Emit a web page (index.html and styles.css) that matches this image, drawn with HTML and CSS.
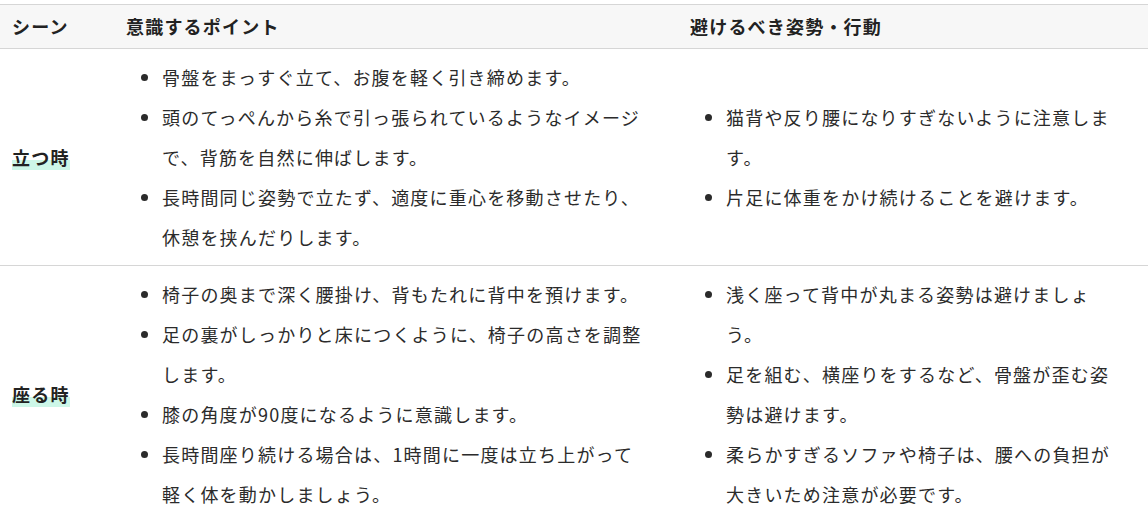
FILE: index.html
```html
<!DOCTYPE html>
<html lang="ja">
<head>
<meta charset="utf-8">
<link rel="stylesheet" href="styles.css">
</head>
<body>
<table class="posture">
  <colgroup>
    <col class="c-scene">
    <col class="c-point">
    <col class="c-avoid">
  </colgroup>
  <thead>
    <tr>
      <th>シーン</th>
      <th>意識するポイント</th>
      <th>避けるべき姿勢・行動</th>
    </tr>
  </thead>
  <tbody>
    <tr>
      <td class="scene"><span class="mark">立つ時</span></td>
      <td>
        <ul class="list">
          <li>骨盤をまっすぐ立て、お腹を軽く引き締めます。</li>
          <li>頭のてっぺんから糸で引っ張られているようなイメージで、背筋を自然に伸ばします。</li>
          <li>長時間同じ姿勢で立たず、適度に重心を移動させたり、休憩を挟んだりします。</li>
        </ul>
      </td>
      <td>
        <ul class="list">
          <li>猫背や反り腰になりすぎないように注意します。</li>
          <li>片足に体重をかけ続けることを避けます。</li>
        </ul>
      </td>
    </tr>
    <tr>
      <td class="scene"><span class="mark">座る時</span></td>
      <td>
        <ul class="list">
          <li>椅子の奥まで深く腰掛け、背もたれに背中を預けます。</li>
          <li>足の裏がしっかりと床につくように、椅子の高さを調整します。</li>
          <li>膝の角度が90度になるように意識します。</li>
          <li>長時間座り続ける場合は、1時間に一度は立ち上がって軽く体を動かしましょう。</li>
        </ul>
      </td>
      <td>
        <ul class="list">
          <li>浅く座って背中が丸まる姿勢は避けましょう。</li>
          <li>足を組む、横座りをするなど、骨盤が歪む姿勢は避けます。</li>
          <li>柔らかすぎるソファや椅子は、腰への負担が大きいため注意が必要です。</li>
        </ul>
      </td>
    </tr>
  </tbody>
</table>
</body>
</html>
```
FILE: styles.css
```css
html, body {
  margin: 0;
  padding: 0;
  background: #ffffff;
}

body {
  font-family: "Noto Sans CJK JP", "Noto Sans", sans-serif;
  font-size: 18px;
  color: #2b2b2b;
  padding-top: 4px;
}

.posture {
  width: 100%;
  border-collapse: collapse;
  table-layout: fixed;
  letter-spacing: 1.2px;
}

.c-scene { width: 114px; }
.c-point { width: 564px; }
.c-avoid { width: 470px; }

.posture th {
  background: #f7f7f7;
  border-top: 1px solid #d6d6d6;
  border-bottom: 1px solid #d6d6d6;
  text-align: left;
  font-weight: 700;
  line-height: 24px;
  padding: 9px 12px 10px;
  color: #222;
}

.posture td {
  border-bottom: 1px solid #d6d6d6;
  padding: 8px 12px;
  vertical-align: middle;
  line-height: 40px;
}

.scene {
  font-weight: 700;
  color: #222;
}

.mark {
  background: linear-gradient(transparent 62%, #cdf7e8 62%);
}

.list {
  margin: 0;
  padding: 0 16px 0 36px;
}

.list li {
  margin: 0;
}
```
